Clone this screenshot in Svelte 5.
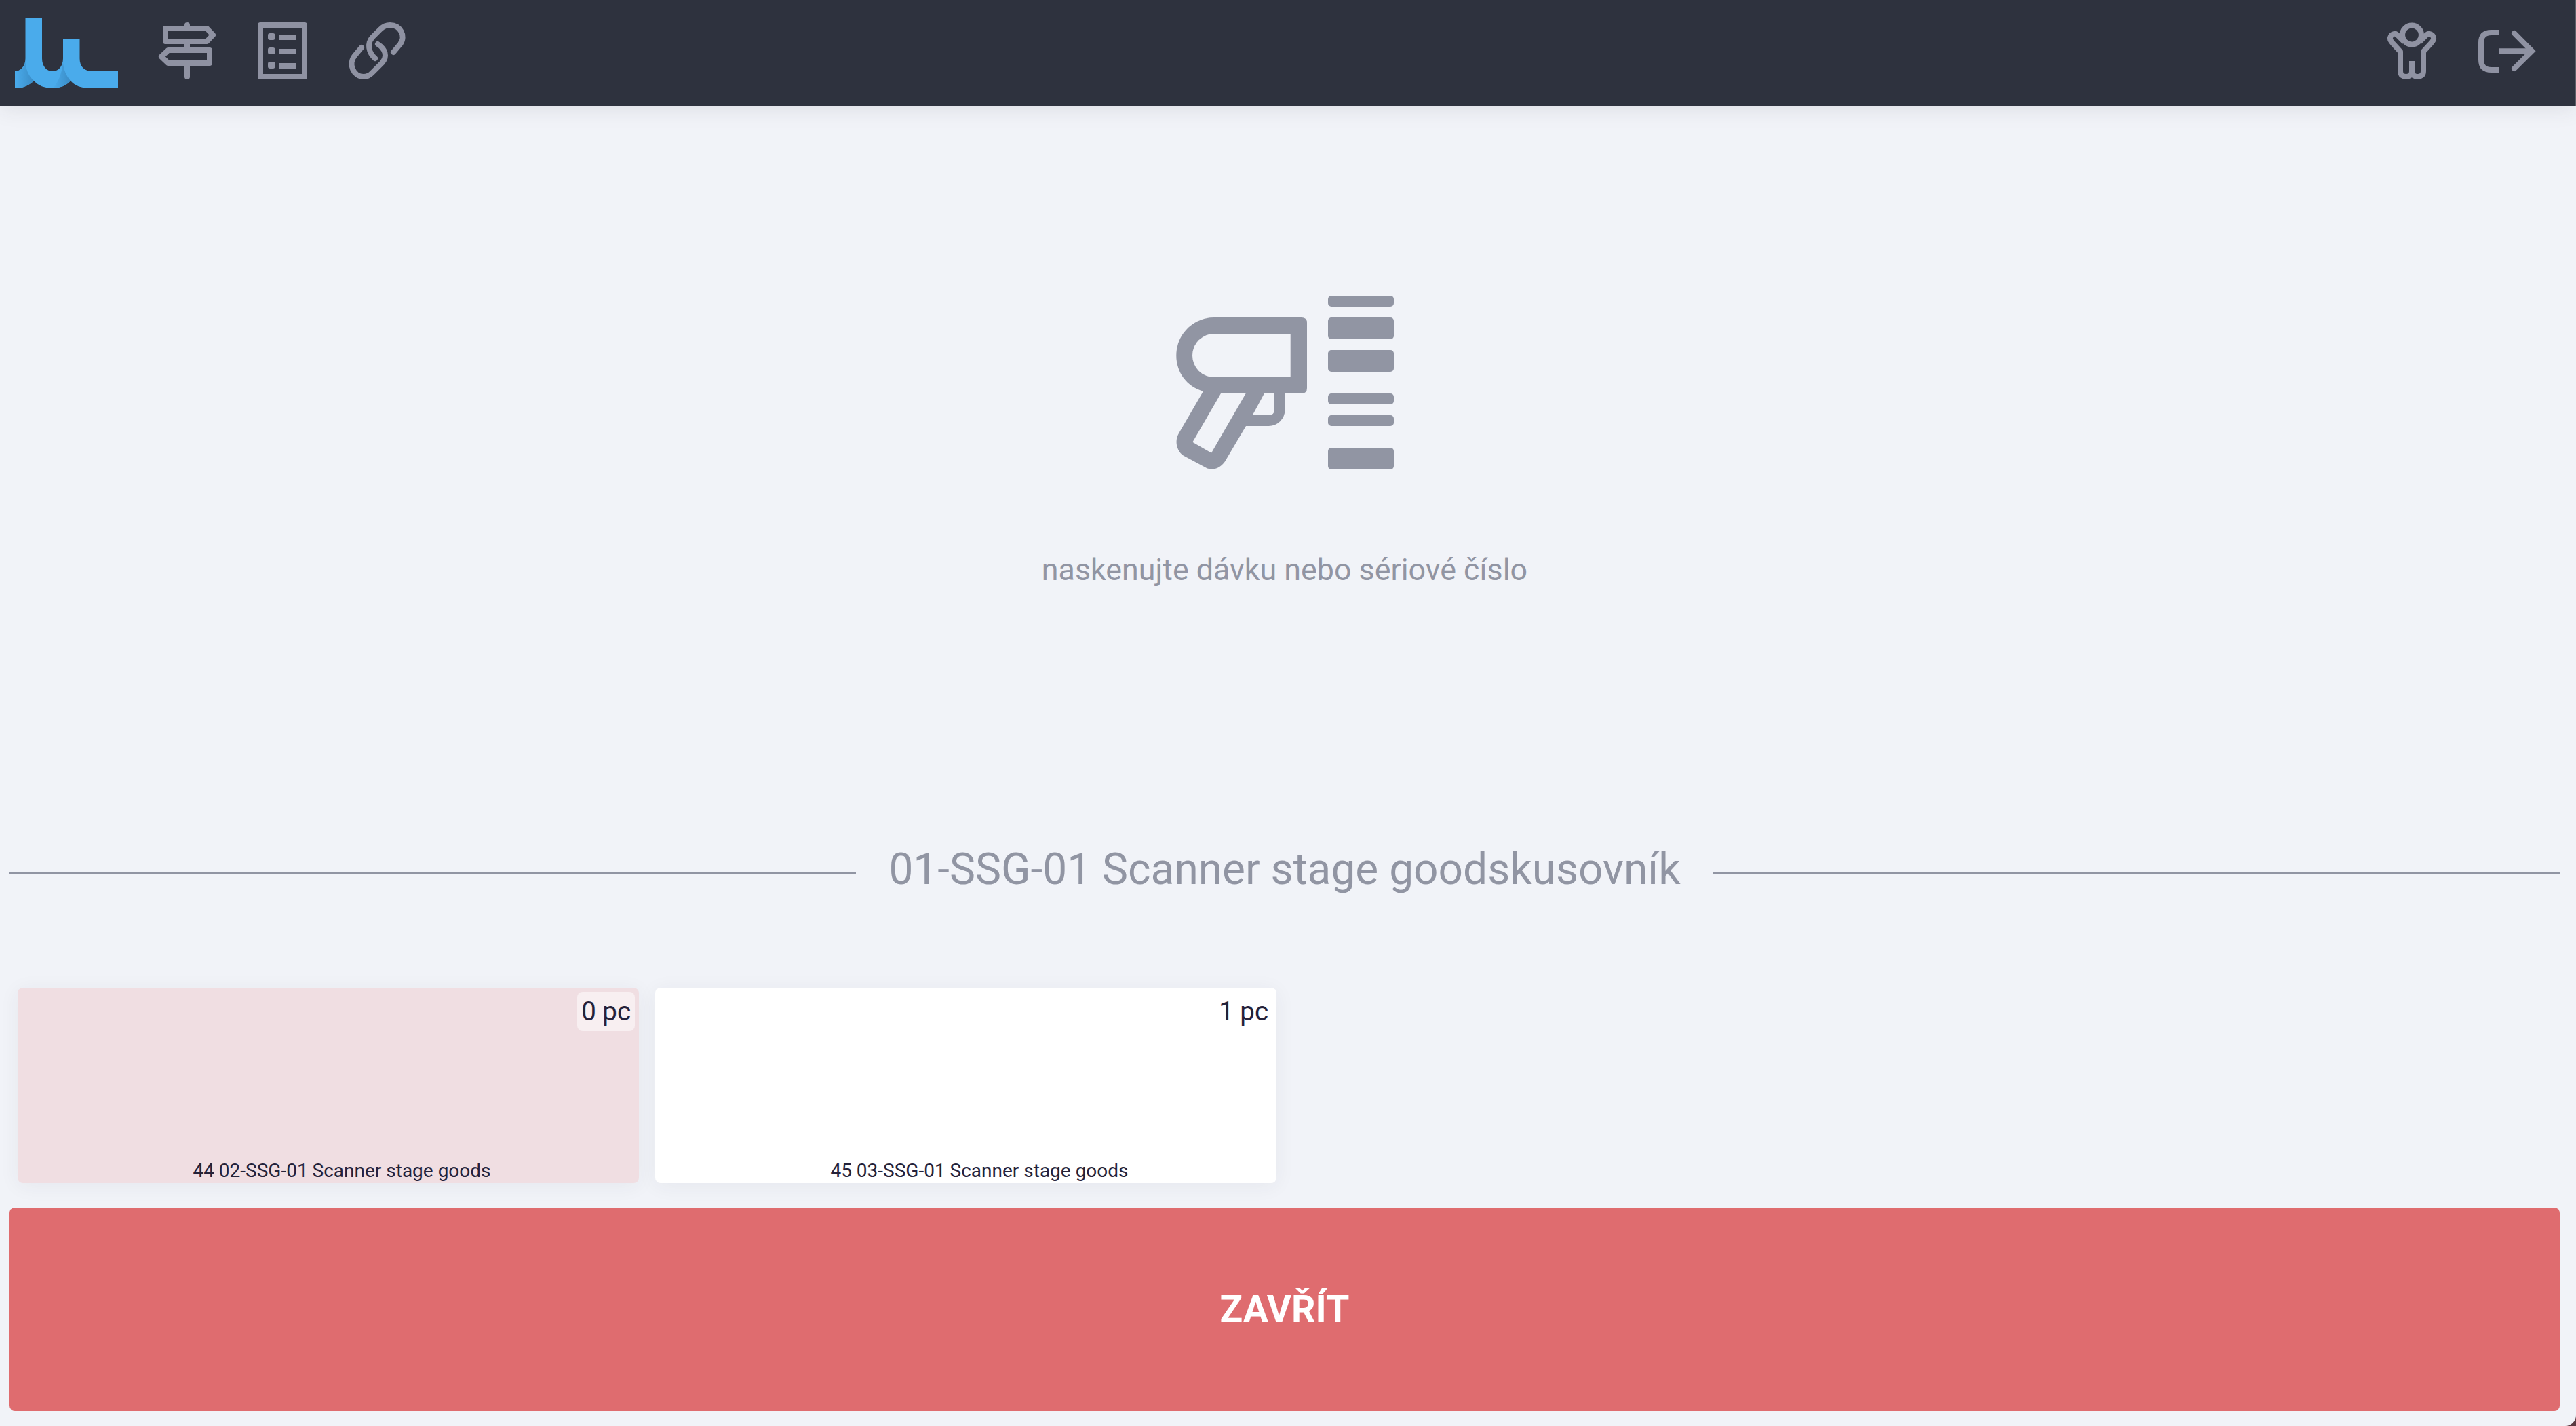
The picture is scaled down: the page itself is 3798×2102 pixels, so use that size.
<script>
    const bars = [
        { y: 0, h: 16 },
        { y: 32, h: 32 },
        { y: 80, h: 32 },
        { y: 144, h: 16 },
        { y: 176, h: 16 },
        { y: 224, h: 32 }
    ];

    const items = [
        { qty: 0, name: '44 02-SSG-01 Scanner stage goods' },
        { qty: 1, name: '45 03-SSG-01 Scanner stage goods' }
    ];
</script>

<div class="page">
    <nav class="navbar">
        <svg class="logo" viewBox="22 24 152 104" width="152" height="104">
            <defs>
                <linearGradient id="fold" x1="0" y1="0" x2="1" y2="0">
                    <stop offset="0" stop-color="#4aabeb" />
                    <stop offset="1" stop-color="#3a8cc6" />
                </linearGradient>
            </defs>
            <path fill="#4aabeb" d="M37.5 24H62V84C62 96 69 103 77.5 103C86 103 93 96 93 84V55H117.5V84C117.5 96 124 103 137 103H174V128H132C120 128 110 124 104 117C98 124 88 128 77.5 128C66 128 56 124 50 117C42 125 32 128 22 128V103C30 103 37.5 96 37.5 84Z" />
            <path fill="url(#fold)" d="M37.5 88C38 100 42 110 50 117C42 125 32 128 22 128V103C30 103 37 98 37.5 88Z" />
            <path fill="url(#fold)" d="M93 88C93 100 98 110 104 117C98 124 88 128 77.5 128C85 122 92 105 93 88Z" />
        </svg>

        <svg class="icon" viewBox="0 0 96 96">
            <path d="M16 15H77L86 24.5L77 34H16Z" />
            <path d="M81 47H20L10 56.5L20 66H81Z" />
            <path d="M48 10V15M48 34V47M48 66V86" stroke-linecap="round" />
        </svg>

        <svg class="icon" viewBox="0 0 96 96">
            <rect x="16" y="10" width="65" height="76" />
            <g class="solid">
                <rect x="27" y="22" width="10.5" height="10" rx="3" />
                <rect x="27" y="43" width="10.5" height="10" rx="3" />
                <rect x="27" y="64" width="10.5" height="10" rx="3" />
                <rect x="43" y="24" width="26" height="8" rx="1" />
                <rect x="43" y="45" width="26" height="8" rx="1" />
                <rect x="43" y="66" width="26" height="8" rx="1" />
            </g>
        </svg>

        <svg class="icon" viewBox="0 0 96 96" stroke-linecap="round">
            <path d="M72 50L82 38C91 26 82 10 67 10C61 10 57 12 53 16L41 28C33 37 35 50 45 59" />
            <path d="M25 43L15 55C5 67 13 86 28 86C33 86 37 84 40 81L55 66C64 56 60 45 49 38" />
        </svg>

        <div class="spacer"></div>

        <svg class="icon" viewBox="0 0 96 96">
            <circle cx="48" cy="24.5" r="14" />
            <path d="M37 35L26 24C21 20 13 27 17 33C18 35 19 36 20 37L31 49V78C31 84 35 86 39.5 86C44 86 48 84 48 78V63" />
            <path d="M59 35L70 24C75 20 83 27 79 33C78 35 77 36 76 37L65 49V78C65 84 61 86 56.5 86C52 86 48 84 48 78V63" />
        </svg>

        <svg class="icon" viewBox="0 0 96 96">
            <path d="M37 21H25C15 21 10 26 10 36V61C10 71 15 76 25 76H37" />
            <path d="M36 48.3H84" />
            <path d="M59 22L85 48.3L59 74" stroke-linejoin="miter" stroke-linecap="round" />
        </svg>
    </nav>

    <main class="content">
        <section class="scan">
            <svg class="scanner" viewBox="-2 0 324 256" width="324" height="256">
                <path
                    fill-rule="evenodd"
                    d="M56 32H185Q193 32 193 40V136Q193 144 185 144H160.5V168A24 24 0 0 1 136.5 192H103L74 241C68 252 58 258 46 254.5L11 235.7C1 229 -3 214 4.3 202.3L40 140.7C16 134 0.3 113 0.3 88C0.3 57 25 32 56 32ZM56 56H168.7V120H56A32 32 0 0 1 56 56ZM66 144H102.7L52 231.7L24.3 215.7ZM130 144H144.7V168Q144.7 176 137 176H112.7Z"
                />
                {#each bars as bar}
                    <rect x="224" y={bar.y} width="97" height={bar.h} rx="5" />
                {/each}
            </svg>
            <p class="hint">naskenujte dávku nebo sériové číslo</p>
        </section>

        <div class="heading">
            <span class="rule"></span>
            <h2>01-SSG-01 Scanner stage goodskusovník</h2>
            <span class="rule"></span>
        </div>

        <div class="cards">
            {#each items as item}
                <div class="card" class:empty={item.qty === 0}>
                    <span class="qty">{item.qty} pc</span>
                    <span class="name">{item.name}</span>
                </div>
            {/each}
        </div>

        <button class="close">ZAVŘÍT</button>
    </main>

    <span class="corner"></span>
</div>

<style>
    :global(body) {
        margin: 0;
        background: #f1f3f8;
    }

    .page {
        position: relative;
        height: 2102px;
        overflow: hidden;
        background: #f1f3f8;
        font-family: Roboto, sans-serif;
    }

    .navbar {
        position: relative;
        display: flex;
        align-items: center;
        gap: 44px;
        height: 156px;
        box-sizing: border-box;
        padding: 0 52px 6px 22px;
        border-right: 2px solid #5e6068;
        background: #2e323e;
        box-shadow: 0 4px 30px rgba(46, 50, 62, 0.1);
    }

    .logo {
        display: block;
        flex: none;
        margin: 6px 10px 0 0;
    }

    .icon {
        display: block;
        flex: none;
        width: 96px;
        height: 96px;
        fill: none;
        stroke: #8f92a2;
        stroke-width: 8;
        stroke-linejoin: round;
    }

    .icon .solid {
        fill: #8f92a2;
        stroke: none;
    }

    .spacer {
        flex: 1;
    }

    .content {
        padding-right: 10px;
    }

    .scan {
        padding-top: 280px;
        text-align: center;
    }

    .scanner {
        display: block;
        margin: 0 auto;
        fill: #9195a3;
    }

    .hint {
        margin: 120px 0 0;
        font-size: 44.8px;
        line-height: 56px;
        color: #9195a3;
    }

    .heading {
        display: flex;
        align-items: center;
        gap: 48px;
        margin-top: 376px;
        padding: 0 14px;
    }

    .heading h2 {
        margin: 0;
        font-size: 64px;
        line-height: 76px;
        font-weight: 400;
        color: #9195a3;
        white-space: nowrap;
    }

    .rule {
        flex: 1;
        height: 2px;
        margin-top: 10px;
        background: #9195a3;
    }

    .cards {
        display: flex;
        gap: 24px;
        margin-top: 136px;
        padding: 0 26px;
    }

    .card {
        position: relative;
        display: flex;
        align-items: flex-end;
        justify-content: center;
        width: 916px;
        height: 288px;
        box-sizing: border-box;
        padding-left: 40px;
        border-radius: 8px;
        background: #fff;
        box-shadow: 0 4px 30px rgba(46, 50, 62, 0.06);
        color: #24223a;
    }

    .card.empty {
        background: #f0dee2;
    }

    .qty {
        position: absolute;
        top: 6px;
        right: 6px;
        height: 58px;
        padding: 0 6px;
        border-radius: 8px;
        background: rgba(255, 255, 255, 0.5);
        font-size: 38.4px;
        line-height: 58px;
    }

    .name {
        font-size: 28px;
        line-height: 36px;
    }

    .close {
        display: block;
        width: calc(100% - 28px);
        height: 300px;
        margin: 36px 14px 0;
        border: 0;
        border-radius: 8px;
        background: #df6c6f;
        color: #fff;
        font-family: Roboto, sans-serif;
        font-size: 55.5px;
        font-weight: 700;
    }

    .corner {
        position: absolute;
        right: 0;
        bottom: 0;
        width: 16px;
        height: 16px;
        background: #5a3a42;
        clip-path: path('M16 0A16 16 0 0 1 0 16H16Z');
    }
</style>
